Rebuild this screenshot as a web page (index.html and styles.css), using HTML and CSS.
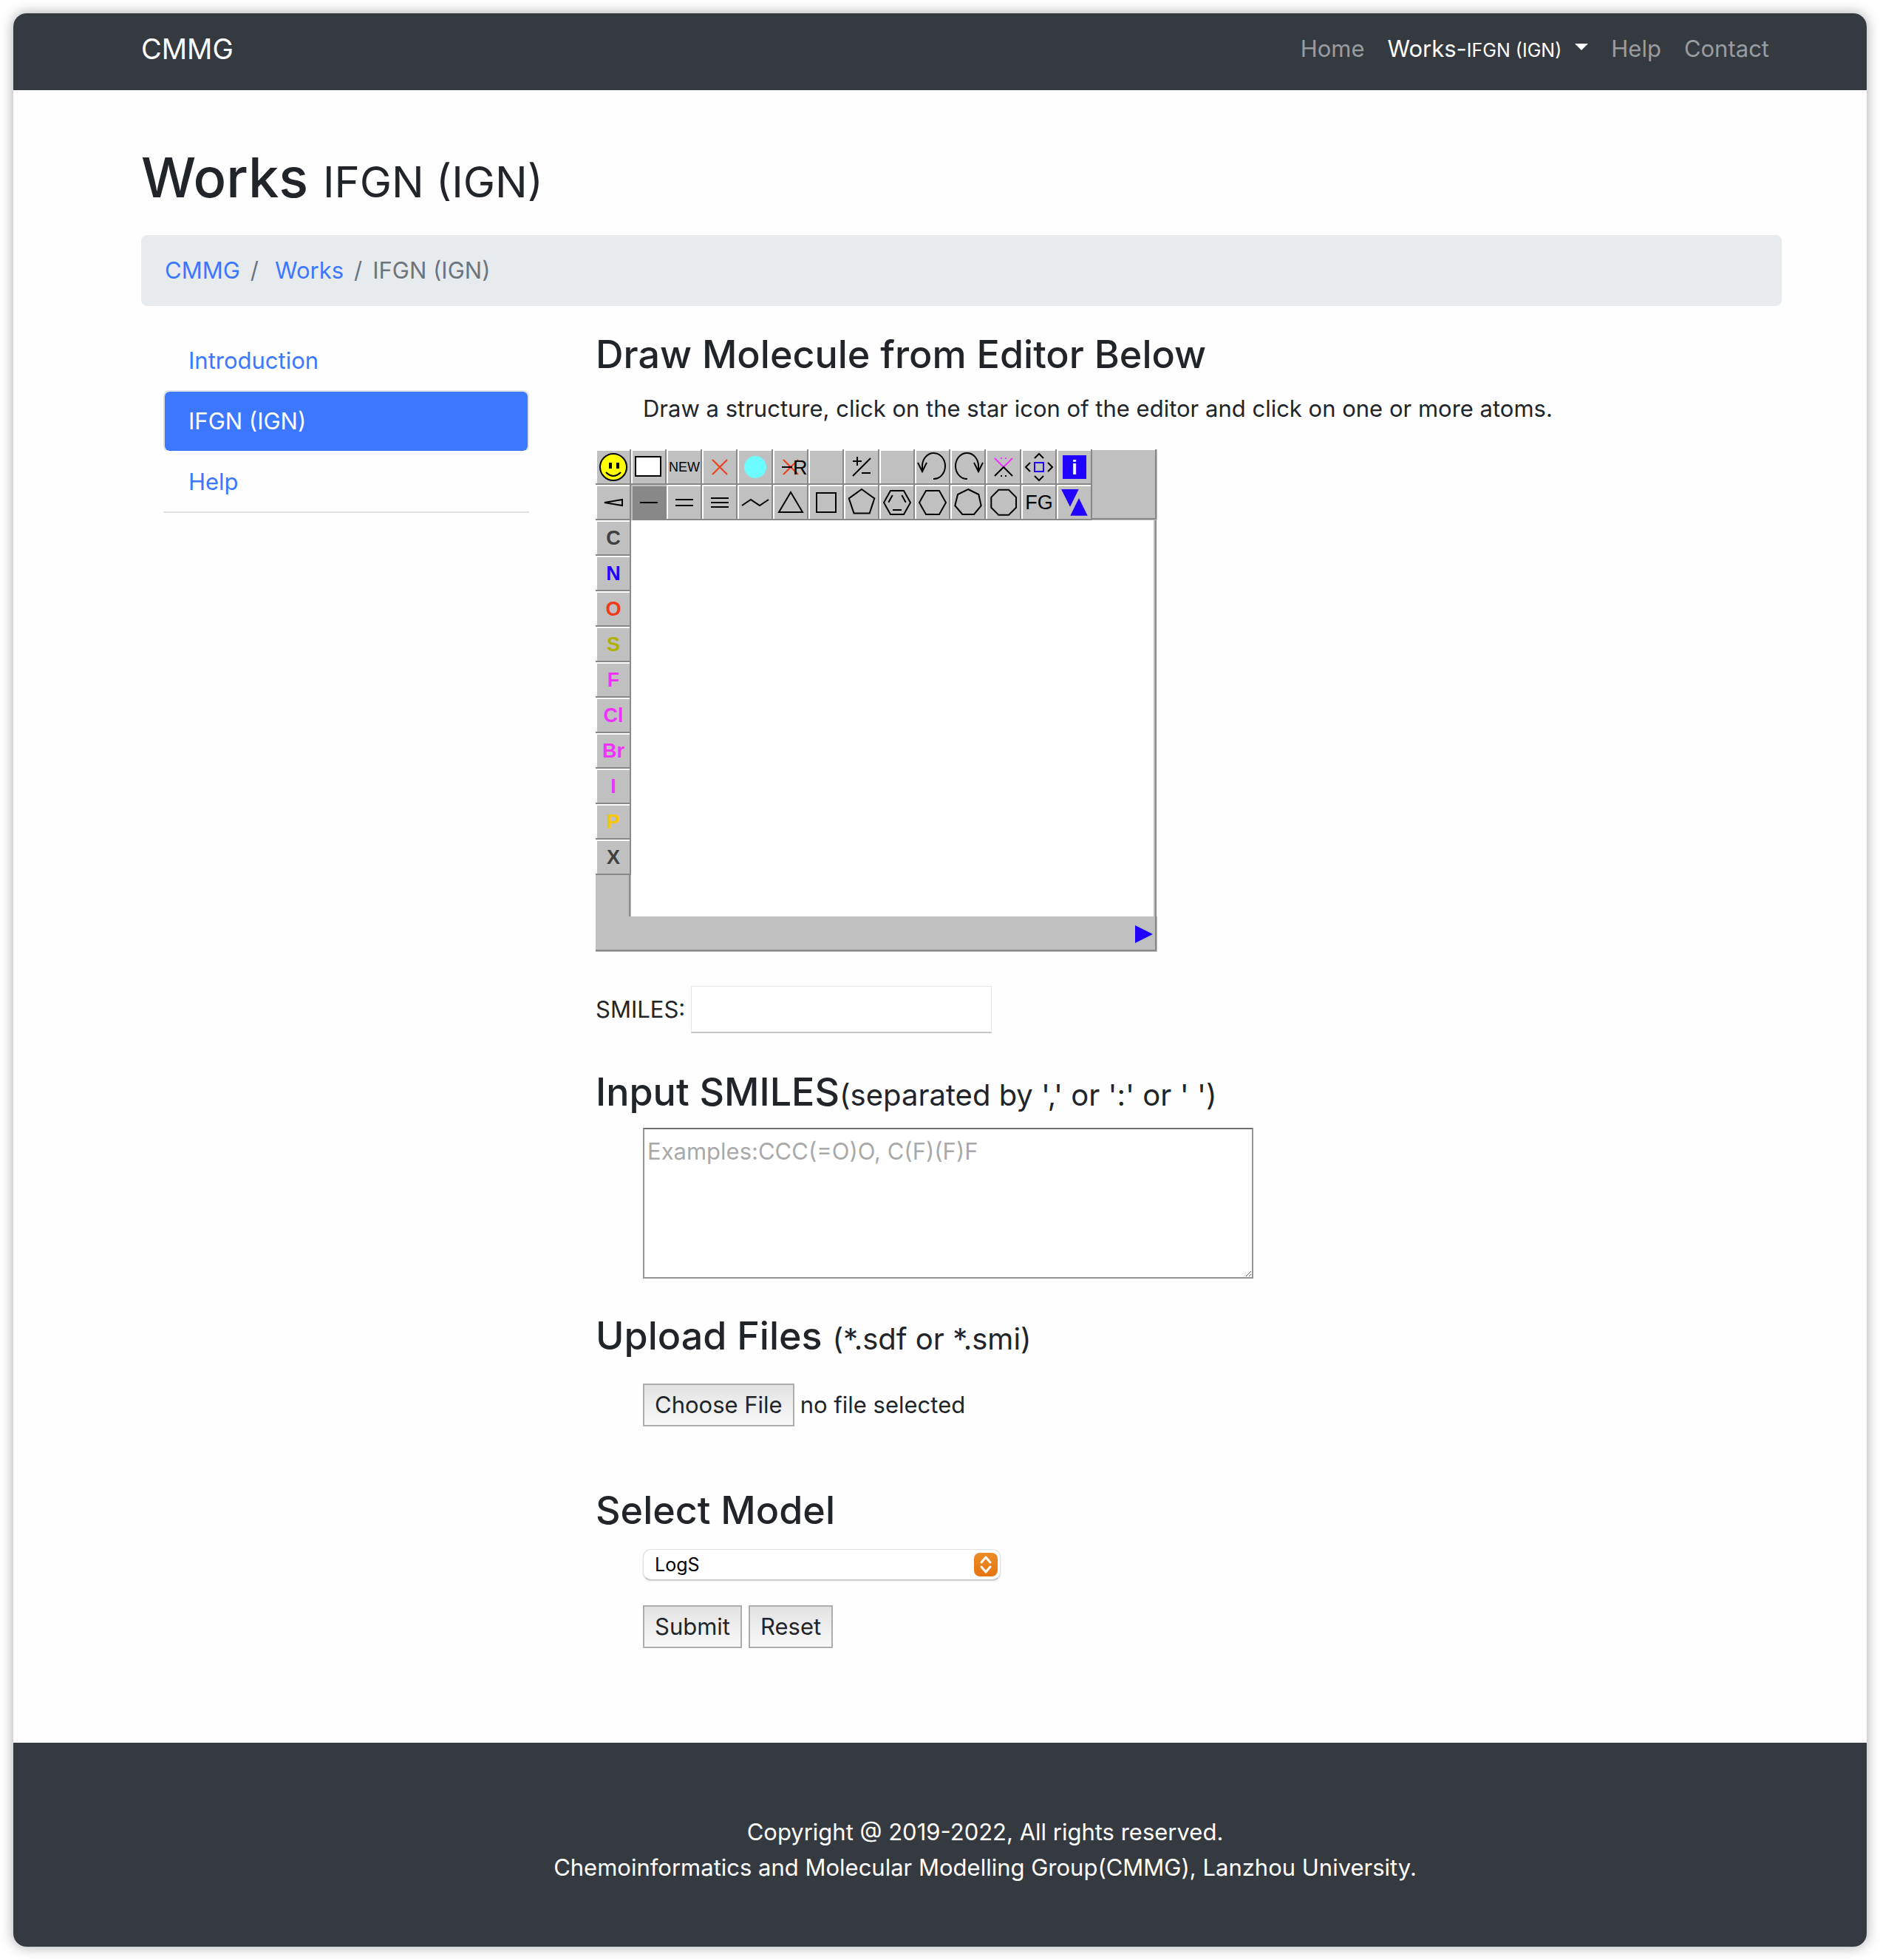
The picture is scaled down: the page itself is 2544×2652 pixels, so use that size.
FILE: index.html
```html
<!DOCTYPE html>
<html lang="en">
<head>
<meta charset="utf-8">
<meta name="viewport" content="width=device-width, initial-scale=1">
<title>CMMG - IFGN (IGN)</title>
<link rel="stylesheet" href="styles.css">
</head>
<body>
<div class="window">
  <header class="navbar">
    <a class="brand" href="#">CMMG</a>
    <nav class="nav-links">
      <a href="#">Home</a>
      <a class="active" href="#">Works-<small>IFGN (IGN)</small><span class="caret"></span></a>
      <a href="#">Help</a>
      <a href="#">Contact</a>
    </nav>
  </header>

  <main class="page">
    <h1>Works <small>IFGN (IGN)</small></h1>
    <nav class="breadcrumb" aria-label="Breadcrumb">
      <a href="#">CMMG</a><span class="slash">/</span><a class="second" href="#">Works</a><span class="slash">/</span><span>IFGN (IGN)</span>
    </nav>

    <div class="columns">
      <nav class="tabs">
        <a href="#">Introduction</a>
        <a class="active" href="#">IFGN (IGN)</a>
        <a href="#">Help</a>
      </nav>

      <form class="content">
        <h3>Draw Molecule from Editor Below</h3>
        <p class="hint">Draw a structure, click on the star icon of the editor and click on one or more atoms.</p>

        <div class="editor">
          <div class="toolbar">
            <button type="button" class="cell" aria-label="SMILES"><svg viewBox="0 0 48 48"><circle cx="24" cy="24" r="18" fill="#ff0"/><path d="M18 18h4v8h-4zM28 18h4v8h-4z" fill="#000" stroke="none"/><path d="M14 31Q24 41 34 31"/></svg></button>
            <button type="button" class="cell" aria-label="Query"><svg viewBox="0 0 48 48"><rect x="6" y="10" width="34" height="26" fill="#fff"/></svg></button>
            <button type="button" class="cell new">NEW</button>
            <button type="button" class="cell" aria-label="Delete"><svg viewBox="0 0 48 48"><path class="red" d="M14 14L34 34M34 14L14 34"/></svg></button>
            <button type="button" class="cell" aria-label="Mark"><svg viewBox="0 0 48 48"><circle cx="24" cy="24" r="15" fill="#6cfbff" stroke="none"/></svg></button>
            <button type="button" class="cell" aria-label="Delete R"><svg viewBox="0 0 48 48"><path class="red" d="M14 14L34 34M34 14L14 34"/><path d="M12 24H26"/><text x="27" y="34">R</text></svg></button>
            <button type="button" class="cell" aria-label="Empty"></button>
            <button type="button" class="cell" aria-label="Charge"><svg viewBox="0 0 48 48"><path d="M12 16H24M18 10V22M12 36L36 12M24 32H36"/></svg></button>
            <button type="button" class="cell" aria-label="Empty"></button>
            <button type="button" class="cell" aria-label="Undo"><svg viewBox="0 0 48 48"><path d="M25 40A15.5 17.5 0 0 0 41 22.5A15.5 17.5 0 0 0 10 22.5V30M4 18L10 30L16 18"/></svg></button>
            <button type="button" class="cell" aria-label="Redo"><svg viewBox="0 0 48 48"><path d="M23 40A15.5 17.5 0 0 1 7 22.5A15.5 17.5 0 0 1 38 22.5V30M32 18L38 30L44 18"/></svg></button>
            <button type="button" class="cell" aria-label="Reaction"><svg viewBox="0 0 48 48"><path class="pink" d="M12 12L24 24L36 12M20 12h2M26 12h2"/><path d="M12 36L24 24L36 36M20 36h2M26 36h2"/></svg></button>
            <button type="button" class="cell" aria-label="Move"><svg viewBox="0 0 48 48"><path d="M18 12L24 6L30 12M18 36L24 42L30 36M12 18L6 24L12 30M36 18L42 24L36 30"/><rect x="18" y="18" width="12" height="12" class="blue"/></svg></button>
            <button type="button" class="cell" aria-label="Information"><svg viewBox="0 0 48 48"><path d="M8 8h32v32H8z" fill="#2000ff" stroke="none"/><text class="info" x="24" y="34" text-anchor="middle">i</text></svg></button>
            <button type="button" class="cell" aria-label="Stereo bond"><svg viewBox="0 0 48 48"><path d="M12 24L36 20V28Z"/></svg></button>
            <button type="button" class="cell selected" aria-label="Single bond"><svg viewBox="0 0 48 48"><path d="M12 24H36"/></svg></button>
            <button type="button" class="cell" aria-label="Double bond"><svg viewBox="0 0 48 48"><path d="M12 20H36M12 28H36"/></svg></button>
            <button type="button" class="cell" aria-label="Triple bond"><svg viewBox="0 0 48 48"><path d="M12 18H36M12 24H36M12 30H36"/></svg></button>
            <button type="button" class="cell" aria-label="Chain"><svg viewBox="0 0 48 48"><path d="M6 28L18 20L30 28L42 20"/></svg></button>
            <button type="button" class="cell" aria-label="Triangle"><svg viewBox="0 0 48 48"><path d="M24 10L8 37H40Z"/></svg></button>
            <button type="button" class="cell" aria-label="Square"><svg viewBox="0 0 48 48"><rect x="11" y="11" width="26" height="26"/></svg></button>
            <button type="button" class="cell" aria-label="Pentagon"><svg viewBox="0 0 48 48"><path d="M24 6L41.3 18.4L34.7 38.4H13.5L6.7 18.4Z"/></svg></button>
            <button type="button" class="cell" aria-label="Benzene"><svg viewBox="0 0 48 48"><path d="M6 24L15 8H33L42 24L33 40H15ZM12.3 23.7L17.7 14M30.3 14L35.7 23.7M18 34H30"/></svg></button>
            <button type="button" class="cell" aria-label="Hexagon"><svg viewBox="0 0 48 48"><path d="M6 24L15 8H33L42 24L33 40H15Z"/></svg></button>
            <button type="button" class="cell" aria-label="Heptagon"><svg viewBox="0 0 48 48"><path d="M24 6L38.3 13L41.7 28.2L32 40H16.3L6.3 28.2L10 13Z"/></svg></button>
            <button type="button" class="cell" aria-label="Octagon"><svg viewBox="0 0 48 48"><path d="M17.3 6.7H31L41 16.8V30.8L31 40.7H17.3L7.3 30.8V16.8Z"/></svg></button>
            <button type="button" class="cell fg">FG</button>
            <button type="button" class="cell" aria-label="Toggle"><svg viewBox="0 0 48 48"><path d="M6 6H29.7L18 29.7ZM30 18L18.3 41.7H41.7Z" fill="#2000ff" stroke="none"/></svg></button>
          </div>
          <div class="toolbar-end"></div>
          <div class="atoms">
            <button type="button" class="cell dark">C</button>
            <button type="button" class="cell nitrogen">N</button>
            <button type="button" class="cell oxygen">O</button>
            <button type="button" class="cell sulfur">S</button>
            <button type="button" class="cell halogen">F</button>
            <button type="button" class="cell halogen">Cl</button>
            <button type="button" class="cell halogen">Br</button>
            <button type="button" class="cell halogen">I</button>
            <button type="button" class="cell phosphorus">P</button>
            <button type="button" class="cell dark">X</button>
          </div>
          <div class="canvas"></div>
          <div class="status">
            <svg width="24" height="24" viewBox="0 0 24 24"><path d="M0 0L24 12L0 24Z" fill="#2000ff" stroke="none"/></svg>
          </div>
        </div>

        <div class="smiles-row">
          <label for="smiles">SMILES:</label>
          <input type="text" id="smiles">
        </div>

        <h3><label for="smiles-list">Input SMILES<small>(separated by ',' or ':' or ' ')</small></label></h3>
        <textarea id="smiles-list" placeholder="Examples:CCC(=O)O, C(F)(F)F"></textarea>

        <h3>Upload Files <small>(*.sdf or *.smi)</small></h3>
        <label class="file">
          <input type="file">
          <span class="btn">Choose File</span>
          <span>no file selected</span>
        </label>

        <h3><label for="model">Select Model</label></h3>
        <div class="select">
          <select id="model"><option>LogS</option></select>
          <svg class="stepper" viewBox="0 0 32 32"><path d="M10 13L16 6L22 13M10 19L16 26L22 19"/></svg>
        </div>

        <div class="actions">
          <button type="submit" class="btn">Submit</button>
          <button type="reset" class="btn">Reset</button>
        </div>
      </form>
    </div>
  </main>

  <footer class="footer">
    <p>Copyright @ 2019-2022, All rights reserved.</p>
    <p>Chemoinformatics and Molecular Modelling Group(CMMG), Lanzhou University.</p>
  </footer>
</div>
</body>
</html>
```
FILE: styles.css
```css
* {
  box-sizing: border-box;
}

body {
  margin: 0;
  padding: 18px;
  background: #fff;
  color: #212529;
  font-family: Inter, "Liberation Sans", sans-serif;
  font-size: 31px;
  line-height: 48px;
}

a {
  color: #3b78ff;
  text-decoration: none;
}

h1, h3, p {
  margin: 0;
}

h1, h3 {
  font-weight: 500;
}

small {
  line-height: 1;
}

h1 small, h3 small {
  font-weight: 400;
}

button, input, textarea, select {
  font: inherit;
  color: inherit;
  border-radius: 0;
}

.window {
  background: #fefefe;
  border-radius: 18px;
  box-shadow: 0 0 18px rgba(0, 0, 0, 0.35);
  overflow: hidden;
}

/* Header */
.navbar {
  display: flex;
  justify-content: space-between;
  align-items: center;
  height: 104px;
  padding: 0 132px 8px 173px;
  background: #353a41;
}

.brand {
  color: #fff;
  font-size: 38px;
}

.nav-links {
  display: flex;
  gap: 31px;
}

.nav-links a {
  color: #999c9f;
}

.nav-links .active {
  color: #fff;
}

.nav-links small {
  font-size: 25px;
}

.caret {
  display: inline-block;
  margin-left: 18px;
  vertical-align: 9px;
  border: 9px solid transparent;
  border-top-color: #fff;
  border-bottom: 0;
}

/* Page */
.page {
  padding: 70px 115px 128px 173px;
}

h1 {
  font-size: 74px;
  line-height: 96px;
}

h1 small {
  font-size: 58px;
}

h3 {
  font-size: 52px;
  line-height: 68px;
}

h3 small {
  font-size: 40px;
}

.breadcrumb {
  display: flex;
  margin: 30px 0 32px;
  padding: 24px 32px;
  border-radius: 8px;
  background: #e8ebee;
  color: #6c757d;
}

.slash {
  margin: 0 14px;
}

.breadcrumb .second {
  margin-left: 8px;
}

.columns {
  display: grid;
  grid-template-columns: 495px 1fr;
  gap: 90px;
  align-items: start;
  padding-left: 30px;
}

.tabs {
  border-bottom: 2px solid #dee2e6;
}

.tabs a {
  display: block;
  margin-bottom: -2px;
  padding: 16px 32px;
  border: 2px solid transparent;
  border-radius: 8px;
}

.tabs .active {
  border-color: #dee2e6 #dee2e6 #fefefe;
  background: #3b78ff;
  background-clip: padding-box;
  color: #fff;
}

.content {
  display: flex;
  flex-direction: column;
  align-items: flex-start;
}

.hint {
  margin: 15px 0 31px;
  padding-left: 64px;
}

/* Molecule editor */
.editor {
  display: grid;
  grid-template-columns: 48px 624px 88px;
  grid-template-rows: 96px 536px 48px;
  background: #c0c0c0;
}

.toolbar {
  grid-column: 1 / 3;
  display: flex;
  flex-wrap: wrap;
}

.toolbar-end {
  box-shadow: inset -1px -1px #c0c0c0, inset -3px -3px #888, inset 0 1px #fff;
}

.cell {
  width: 48px;
  height: 48px;
  padding: 0;
  border: 0;
  background: #c0c0c0;
  box-shadow: inset -2px -2px #888, inset 2px 2px #fff;
  color: #000;
  font-family: "Liberation Sans", Arial, sans-serif;
  font-size: 27px;
  line-height: 48px;
  text-align: center;
}

.cell svg {
  display: block;
  width: 48px;
  height: 48px;
  fill: none;
  stroke: #000;
  stroke-width: 2;
}

.cell text {
  fill: #000;
  stroke: none;
}

.cell .info {
  fill: #fff;
  font-weight: 700;
}

.cell .red {
  stroke: #f03c1a;
}

.cell .pink {
  stroke: #f032ff;
}

.cell .blue {
  stroke: #2000ff;
}

.cell.new {
  font-size: 18px;
}

.cell.selected {
  background: #888;
  box-shadow: inset 2px 2px #c0c0c0;
}

.atoms {
  box-shadow: inset -1px 0 #c0c0c0, inset -3px 0 #888;
}

.atoms .cell {
  display: block;
  font-weight: 700;
}

.atoms .dark {
  color: #404040;
}

.atoms .nitrogen {
  color: #2000ff;
}

.atoms .oxygen {
  color: #f03a18;
}

.atoms .sulfur {
  color: #b0b000;
}

.atoms .halogen {
  color: #f032ff;
}

.atoms .phosphorus {
  color: #f8c800;
}

.canvas {
  grid-column: 2 / 4;
  background: #fff;
  box-shadow: inset -1px 0 #fff, inset -3px 0 #888, inset -5px 0 #c0c0c0;
}

.status {
  grid-column: 1 / 4;
  display: flex;
  align-items: center;
  justify-content: flex-end;
  padding-right: 6px;
  box-shadow: inset -1px -1px #c0c0c0, inset -3px -3px #888;
}

/* Form */
.smiles-row {
  display: flex;
  align-items: center;
  gap: 8px;
  margin: 46px 0;
}

.smiles-row input {
  width: 407px;
  height: 64px;
  padding: 0 8px;
  border: 1px solid #e6e6e6;
  border-bottom: 2px solid #c4c4c4;
  background: #fff;
}

textarea {
  display: block;
  width: 826px;
  height: 204px;
  margin: 14px 0 44px 64px;
  padding: 6px 4px;
  border: 2px solid #959595;
  border-top-color: #707070;
  background: #fff;
}

textarea::placeholder {
  color: #a9a9a9;
}

.file {
  display: flex;
  align-items: center;
  gap: 8px;
  margin: 30px 0 80px 64px;
}

.file input {
  position: absolute;
  width: 1px;
  height: 1px;
  opacity: 0;
}

.btn {
  height: 58px;
  padding: 0 14px;
  border: 2px solid #adadad;
  background: linear-gradient(#e3e3e3, #f8f8f8);
  line-height: 54px;
}

.select {
  position: relative;
  margin: 18px 0 34px 64px;
}

.select select {
  display: block;
  width: 484px;
  height: 42px;
  padding: 0 48px 0 15px;
  appearance: none;
  border: 1px solid #e2e2e2;
  border-bottom-color: #c0c0c0;
  border-radius: 11px;
  background: #fff;
  box-shadow: 0 1px 2px rgba(0, 0, 0, 0.2);
  color: #000;
  font-size: 25px;
  line-height: 40px;
}

.stepper {
  position: absolute;
  top: 5px;
  right: 4px;
  width: 32px;
  height: 32px;
  border-radius: 8px;
  background: linear-gradient(#ec8c28, #e6740e);
  fill: none;
  stroke: #fff;
  stroke-width: 3;
  stroke-linecap: round;
  stroke-linejoin: round;
  pointer-events: none;
}

.actions {
  display: flex;
  gap: 9px;
  margin-left: 64px;
}

.footer {
  padding: 97px 0 83px 122px;
  background: #353a41;
  color: #fff;
  text-align: center;
}
```
